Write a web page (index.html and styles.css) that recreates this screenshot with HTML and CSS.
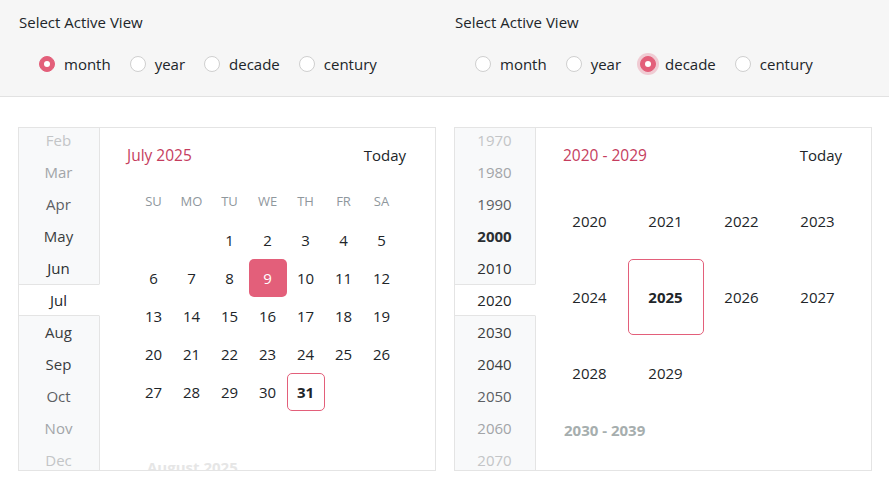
FILE: index.html
```html
<!DOCTYPE html>
<html lang="en">
<head>
<meta charset="utf-8">
<title>Calendar views</title>
<link rel="stylesheet" href="styles.css">
</head>
<body>
<div class="toolbar">
  <div class="col">
    <div class="label">Select Active View</div>
    <div class="radios">
      <label class="radio"><span class="dot checked"></span>month</label>
      <label class="radio"><span class="dot"></span>year</label>
      <label class="radio"><span class="dot"></span>decade</label>
      <label class="radio"><span class="dot"></span>century</label>
    </div>
  </div>
  <div class="col">
    <div class="label">Select Active View</div>
    <div class="radios">
      <label class="radio"><span class="dot"></span>month</label>
      <label class="radio"><span class="dot"></span>year</label>
      <label class="radio"><span class="dot checked focused"></span>decade</label>
      <label class="radio"><span class="dot"></span>century</label>
    </div>
  </div>
</div>

<div class="panes">
  <div class="calendar">
    <ul class="nav">
      <li class="f4">Feb</li>
      <li class="f3">Mar</li>
      <li class="f2">Apr</li>
      <li class="f1">May</li>
      <li>Jun</li>
      <li class="sel">Jul</li>
      <li class="f1">Aug</li>
      <li class="f1">Sep</li>
      <li class="f2">Oct</li>
      <li class="f3">Nov</li>
      <li class="f4">Dec</li>
    </ul>
    <div class="view">
      <div class="head"><span class="title">July 2025</span><span class="today">Today</span></div>
      <table class="month">
        <thead>
          <tr><th>SU</th><th>MO</th><th>TU</th><th>WE</th><th>TH</th><th>FR</th><th>SA</th></tr>
        </thead>
        <tbody>
          <tr><td></td><td></td><td>1</td><td>2</td><td>3</td><td>4</td><td>5</td></tr>
          <tr><td>6</td><td>7</td><td>8</td><td><span class="cell selected">9</span></td><td>10</td><td>11</td><td>12</td></tr>
          <tr><td>13</td><td>14</td><td>15</td><td>16</td><td>17</td><td>18</td><td>19</td></tr>
          <tr><td>20</td><td>21</td><td>22</td><td>23</td><td>24</td><td>25</td><td>26</td></tr>
          <tr><td>27</td><td>28</td><td>29</td><td>30</td><td><span class="cell today-cell">31</span></td><td></td><td></td></tr>
        </tbody>
      </table>
      <div class="ghost month-ghost">August 2025</div>
    </div>
  </div>

  <div class="calendar">
    <ul class="nav">
      <li class="f4">1970</li>
      <li class="f3">1980</li>
      <li class="f2">1990</li>
      <li class="bold">2000</li>
      <li>2010</li>
      <li class="sel">2020</li>
      <li class="f1">2030</li>
      <li class="f1">2040</li>
      <li class="f2">2050</li>
      <li class="f3">2060</li>
      <li class="f4">2070</li>
    </ul>
    <div class="view">
      <div class="head"><span class="title">2020 - 2029</span><span class="today">Today</span></div>
      <div class="years">
        <span class="year">2020</span>
        <span class="year">2021</span>
        <span class="year">2022</span>
        <span class="year">2023</span>
        <span class="year">2024</span>
        <span class="year today-cell">2025</span>
        <span class="year">2026</span>
        <span class="year">2027</span>
        <span class="year">2028</span>
        <span class="year">2029</span>
      </div>
      <div class="ghost decade-ghost">2030 - 2039</div>
    </div>
  </div>
</div>
</body>
</html>
```

FILE: styles.css
```css
* { box-sizing: border-box; }

body {
  margin: 0;
  font-family: "Open Sans", "Noto Sans", sans-serif;
  font-size: 14px;
  color: #212529;
  background: #ffffff;
}

.toolbar {
  display: grid;
  grid-template-columns: 418px 418px;
  column-gap: 18px;
  padding: 0 18px 0 19px;
  height: 97px;
  background: #f6f6f6;
  border-bottom: 1px solid #e2e2e2;
}

.label {
  padding-top: 12px;
  line-height: 20px;
  font-size: 15px;
}

.radios {
  display: flex;
  align-items: center;
  gap: 19px;
  margin-top: 22px;
  padding-left: 20px;
  height: 20px;
}

.radio {
  display: flex;
  align-items: center;
  gap: 9px;
  font-size: 15px;
  line-height: 20px;
}

.dot {
  width: 16px;
  height: 16px;
  border-radius: 50%;
  border: 1px solid #cfcfcf;
  background: #ffffff;
  display: flex;
  align-items: center;
  justify-content: center;
}

.dot.checked {
  background: #e35f7a;
  border-color: #e35f7a;
}

.dot.checked::after {
  content: "";
  width: 6px;
  height: 6px;
  border-radius: 50%;
  background: #ffffff;
}

.dot.focused {
  box-shadow: 0 0 0 3px rgba(227, 95, 122, 0.28);
}

.panes {
  display: grid;
  grid-template-columns: 418px 418px;
  column-gap: 18px;
  padding: 0 18px;
  margin-top: 30px;
}

.calendar {
  display: flex;
  height: 344px;
  border: 1px solid #e4e4e4;
  overflow: hidden;
}

.nav {
  list-style: none;
  margin: -4px 0 0 0;
  padding: 0;
  width: 81px;
  flex: none;
  background: #f8f9fa;
  font-size: 15px;
}

.nav li {
  height: 32px;
  line-height: 32px;
  text-align: center;
  padding-right: 1px;
  border-right: 1px solid #e4e4e4;
  color: #2b2f33;
}

.nav li.sel {
  background: #ffffff;
  border-top: 1px solid #e4e4e4;
  border-bottom: 1px solid #e4e4e4;
  border-right-color: #ffffff;
  line-height: 30px;
  color: #212529;
}

.nav li.f1 { color: #3a3d40; }
.nav li.f2 { color: #5c6064; }
.nav li.f3 { color: #a2a5a8; }
.nav li.f4 { color: #c3c5c7; }
.nav li.bold { font-weight: 700; color: #2b2f33; }

.view {
  flex: 1;
  overflow: hidden;
}

.head {
  height: 55px;
  padding: 0 29px 1px 27px;
  display: flex;
  align-items: center;
  justify-content: space-between;
  font-size: 15px;
}

.title { color: #c53d5e; font-size: 15.5px; }
.today { color: #212529; }

.month {
  border-collapse: collapse;
  margin: 0 auto;
  width: 266px;
  table-layout: fixed;
}

.month th {
  height: 38px;
  font-weight: 400;
  font-size: 13px;
  color: #8f979d;
  text-align: center;
  padding: 0 0 2px 0;
}

.month td {
  height: 38px;
  width: 38px;
  padding: 0;
  text-align: center;
  font-size: 15px;
}

.cell {
  display: flex;
  align-items: center;
  justify-content: center;
  width: 38px;
  height: 38px;
  border-radius: 5px;
}

.cell.selected {
  background: #e35f7a;
  color: #ffffff;
}

.today-cell {
  border: 1px solid #e35f7a;
  border-radius: 5px;
  font-weight: 700;
}

.ghost {
  font-weight: 700;
  font-size: 15px;
  line-height: 30px;
}

.month-ghost {
  color: #e6e6e6;
  padding-left: 47px;
  margin-top: 41px;
}

.years {
  display: grid;
  grid-template-columns: repeat(4, 76px);
  grid-auto-rows: 76px;
  width: 304px;
  margin: 0 auto;
}

.year {
  display: flex;
  align-items: center;
  justify-content: center;
  font-size: 15px;
}

.decade-ghost {
  color: #a6aeae;
  padding-left: 28px;
  margin-top: 4px;
}
```
